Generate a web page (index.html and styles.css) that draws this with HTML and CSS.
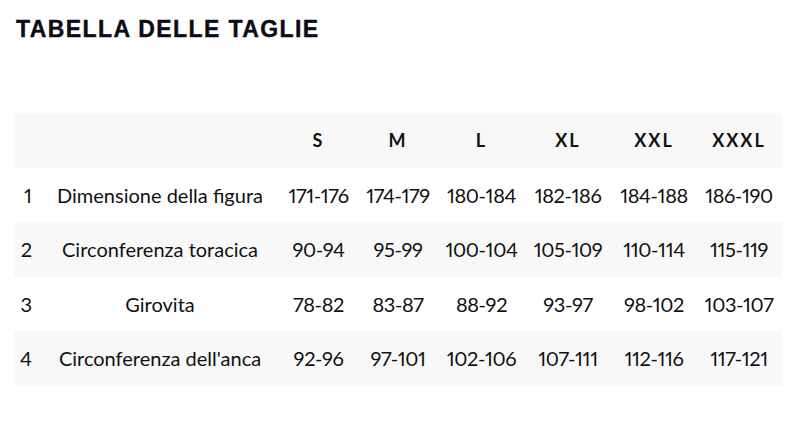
FILE: index.html
```html
<!DOCTYPE html>
<html lang="it">
<head>
<meta charset="utf-8">
<title>Tabella delle taglie</title>
<link rel="stylesheet" href="styles.css">
</head>
<body>
<main class="page">
  <h1 class="title">TABELLA DELLE TAGLIE</h1>
  <table class="sizes">
    <colgroup>
      <col class="c-num"><col class="c-name"><col class="c-s"><col class="c-m"><col class="c-l"><col class="c-xl"><col class="c-xxl"><col class="c-xxxl">
    </colgroup>
    <thead>
      <tr class="shade"><th></th><th></th><th>S</th><th>M</th><th>L</th><th>XL</th><th>XXL</th><th>XXXL</th></tr>
    </thead>
    <tbody>
      <tr><td class="num">1</td><td>Dimensione della figura</td><td>171-176</td><td>174-179</td><td>180-184</td><td>182-186</td><td>184-188</td><td>186-190</td></tr>
      <tr class="shade"><td class="num">2</td><td>Circonferenza toracica</td><td>90-94</td><td>95-99</td><td>100-104</td><td>105-109</td><td>110-114</td><td>115-119</td></tr>
      <tr><td class="num">3</td><td>Girovita</td><td>78-82</td><td>83-87</td><td>88-92</td><td>93-97</td><td>98-102</td><td>103-107</td></tr>
      <tr class="shade"><td class="num">4</td><td>Circonferenza dell'anca</td><td>92-96</td><td>97-101</td><td>102-106</td><td>107-111</td><td>112-116</td><td>117-121</td></tr>
    </tbody>
  </table>
</main>
</body>
</html>
```
FILE: styles.css
```css
html, body {
  margin: 0;
  padding: 0;
  background: #ffffff;
}
.page {
  padding: 16px 17px 0 14px;
}
.title {
  margin: 0 0 0 2px;
  font-family: "Liberation Sans", Arial, sans-serif;
  font-weight: 700;
  font-size: 23px;
  line-height: 26px;
  letter-spacing: 1.4px;
  color: #0b0c16;
  -webkit-text-stroke: 0.4px #0b0c16;
}
.sizes {
  margin-top: 71px;
  width: 768px;
  border-collapse: collapse;
  table-layout: fixed;
  font-family: Lato, sans-serif;
  font-size: 20px;
  font-variant-numeric: proportional-nums;
  color: #111;
}
.c-num { width: 26px; }
.c-name { width: 240px; }
.c-s { width: 77px; }
.c-m { width: 82px; }
.c-l { width: 85px; }
.c-xl { width: 88px; }
.c-xxl { width: 84px; }
.c-xxxl { width: 86px; }
.sizes th, .sizes td {
  height: 54.5px;
  padding: 0;
  text-align: center;
  vertical-align: middle;
  white-space: nowrap;
}
.sizes td + td + td {
  letter-spacing: -0.4px;
}
.sizes th {
  font-weight: 700;
  font-size: 18px;
  letter-spacing: 2px;
}
.sizes td.num {
  text-align: right;
  padding-right: 8px;
}
.shade {
  background: #f8f8f8;
}
```
